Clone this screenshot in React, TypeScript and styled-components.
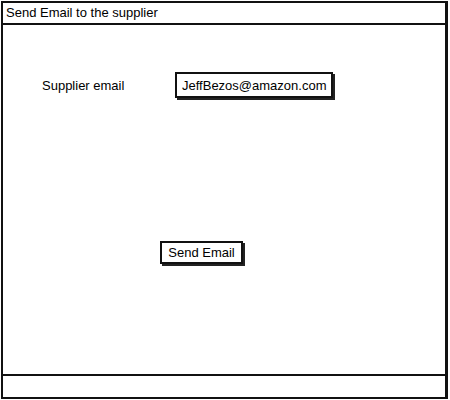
import React from 'react'
import styled, { createGlobalStyle } from 'styled-components'

const GlobalStyle = createGlobalStyle`
  html, body {
    margin: 0;
    padding: 0;
    background: #fff;
  }
  body {
    font-family: 'Liberation Sans', Arial, sans-serif;
    color: #000;
  }
`

const Page = styled.div`
  width: 450px;
  height: 400px;
  padding: 1px 0 0 1px;
  box-sizing: border-box;
`

const Window = styled.div`
  width: 447px;
  height: 398px;
  box-sizing: border-box;
  border: 2px solid #111;
  border-right-width: 3px;
  display: flex;
  flex-direction: column;
`

const TitleBar = styled.div`
  height: 20px;
  flex: none;
  border-bottom: 2px solid #111;
  padding-left: 3px;
  font-size: 13px;
  line-height: 20px;
`

const Content = styled.div`
  flex: 1;
  padding: 47px 0 0 39px;
  display: flex;
  flex-direction: column;
  align-items: flex-start;
`

const FieldRow = styled.div`
  display: flex;
  align-items: center;
`

const Label = styled.span`
  width: 133px;
  font-size: 13px;
`

const SketchBox = styled.div<{ $width: number; $height: number }>`
  width: ${(p) => p.$width}px;
  height: ${(p) => p.$height}px;
  box-sizing: border-box;
  border: 2px solid #111;
  box-shadow: 2px 2px 0 #222;
  background: #fff;
  display: flex;
  align-items: center;
  font-size: 13px;
`

const Input = styled(SketchBox)`
  padding-left: 5px;
`

const Button = styled(SketchBox)`
  margin: 143px 0 0 118px;
  justify-content: center;
`

const Footer = styled.div`
  height: 21px;
  flex: none;
  border-top: 2px solid #111;
`

export default function App() {
  return (
    <Page>
      <GlobalStyle />
      <Window>
        <TitleBar>Send Email to the supplier</TitleBar>
        <Content>
          <FieldRow>
            <Label>Supplier email</Label>
            <Input $width={158} $height={26}>JeffBezos@amazon.com</Input>
          </FieldRow>
          <Button $width={83} $height={23}>Send Email</Button>
        </Content>
        <Footer />
      </Window>
    </Page>
  )
}
